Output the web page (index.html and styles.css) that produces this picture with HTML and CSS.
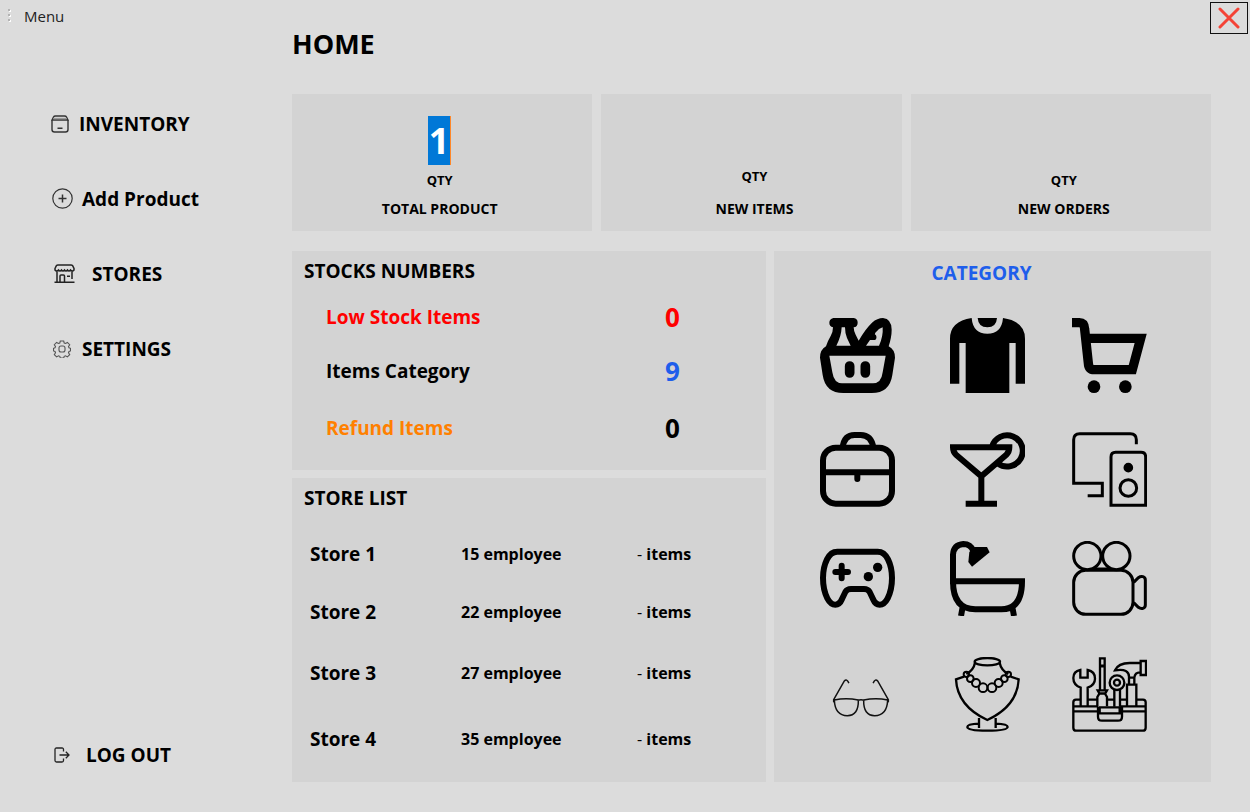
FILE: index.html
```html
<!DOCTYPE html>
<html lang="en">
<head>
<meta charset="utf-8">
<title>Home</title>
<link rel="stylesheet" href="styles.css">
</head>
<body>
<div class="app">
  <aside class="sidebar">
    <div class="menu-bar">
      <svg class="grip" viewBox="0 0 5 14" aria-hidden="true"><g fill="#fff"><path d="M2 2h2v2H2zM2 7h2v2H2zM2 12h2v2H2z"/></g><g fill="#b4b4b4"><path d="M1 1h2v2H1zM1 6h2v2H1zM1 11h2v2H1z"/></g></svg>
      <span>Menu</span>
    </div>
    <nav class="nav">
      <button class="nav-item inventory" type="button">
        <svg class="icon-18" viewBox="0 0 18 18" fill="none" stroke="#333" stroke-width="1.4"><path d="M1 5v9.500Q1 17 3.500 17h11q2.500 0 2.500-2.500V5M1 5l1.500-3Q3 1 4.500 1h9q1.500 0 2 1L17 5zM6.500 13.200h5"/><path d="M2.500 3.500h13" stroke="#999"/></svg>
        INVENTORY
      </button>
      <button class="nav-item add" type="button">
        <svg class="icon-21" viewBox="0 0 21 21" fill="none" stroke="#333" stroke-width="1.200"><circle cx="10.500" cy="10.500" r="9.700"/><path d="M10.500 6.500v8M6.500 10.500h8" stroke-width="1.500"/></svg>
        Add Product
      </button>
      <button class="nav-item stores" type="button">
        <svg class="icon-21" viewBox="0 0 21 21" fill="none" stroke="#222" stroke-width="1.500"><path d="M1 5.500 2.500 2.500Q3 2 4 2h13q1 0 1.500.500L20 5.500V7q-1.500 2-3.500 0-1.500 2-3 0-1.500 2-3 0-1.500 2-3 0-1.500 2-3 0Q2.500 9 1 7zM3 8.500V19M18 8.500V16M.500 19.200h20M6 19v-6q0-1 1-1h2.500q1 0 1 1v6M13 13.200h3"/></svg>
        STORES
      </button>
      <button class="nav-item settings" type="button">
        <svg class="icon-18" viewBox="0 0 18 18" fill="none" stroke="#555" stroke-width="1.100"><path d="M7.300 1h3.400l.5 2 1.300.5 1.900-1.100 2.300 2.300-1.200 1.800.5 1.300 1.500.5v2.600l-1.500.6-.5 1.300 1.200 1.900-2.300 2.200-1.900-1.100-1.300.5-.5 1.700H7.300l-.5-1.700-1.300-.5-1.900 1.100-2.300-2.200 1.200-1.900-.5-1.300-1.500-.6V8.300L2 7.800l.5-1.300-1.200-1.800 2.300-2.300 1.900 1.100L6.800 3z"/><rect x="6" y="6" width="6" height="6" rx="2"/></svg>
        SETTINGS
      </button>
    </nav>
    <button class="nav-item logout" type="button">
      <svg class="icon-16" viewBox="0 0 16 16" fill="none" stroke="#222" stroke-width="1.300"><path d="M9.500 4.500V2.500Q9.500 1 8 1H2.500Q1 1 1 2.500v11Q1 15 2.500 15H8q1.500 0 1.500-1.500v-2M5.500 8H15M11.800 4.800 15 8l-3.200 3.200"/></svg>
      LOG OUT
    </button>
  </aside>

  <main class="main">
    <h1 class="page-title">HOME</h1>

    <section class="stats">
      <div class="panel stat stat-total">
        <input class="stat-value" id="total" type="text" value="1" aria-describedby="total-name">
        <label class="stat-unit" for="total">QTY</label>
        <h2 class="stat-name" id="total-name">TOTAL PRODUCT</h2>
      </div>
      <div class="panel stat stat-raised">
        <p class="stat-unit">QTY</p>
        <h2 class="stat-name">NEW ITEMS</h2>
      </div>
      <div class="panel stat">
        <p class="stat-unit">QTY</p>
        <h2 class="stat-name">NEW ORDERS</h2>
      </div>
    </section>

    <div class="content">
      <div class="reports">
        <section class="panel stocks">
          <h2 class="panel-title">STOCKS NUMBERS</h2>
          <table class="stock-table">
            <tr class="low"><th scope="row">Low Stock Items</th><td>0</td></tr>
            <tr class="count"><th scope="row">Items Category</th><td>9</td></tr>
            <tr class="refund"><th scope="row">Refund Items</th><td>0</td></tr>
          </table>
        </section>
        <section class="panel store-list">
          <h2 class="panel-title">STORE LIST</h2>
          <table class="store-table">
            <tr class="row-1"><th scope="row">Store 1</th><td>15 employee</td><td><span class="dash">-</span> items</td></tr>
            <tr class="row-2"><th scope="row">Store 2</th><td>22 employee</td><td><span class="dash">-</span> items</td></tr>
            <tr class="row-3"><th scope="row">Store 3</th><td>27 employee</td><td><span class="dash">-</span> items</td></tr>
            <tr class="row-4"><th scope="row">Store 4</th><td>35 employee</td><td><span class="dash">-</span> items</td></tr>
          </table>
        </section>
      </div>

      <section class="panel category">
        <h2 class="category-title">CATEGORY</h2>
        <div class="category-grid">
          <button type="button" aria-label="Groceries"><svg viewBox="60 53 225 225">
            <path d="M100 53H161Q173 55 173 67T161 81Q161 92 167 103L176 121Q196 86 216 67Q232 53 249 53Q275 56 275 88Q275 110 266 138Q285 148 285 172L277 224Q269 278 215 278H130Q76 278 68 224L60 172Q60 148 78 138Q82 124 92 107Q99 96 99 81Q88 78 88 67T100 53Z"/>
            <path fill="#d3d3d3" d="M125 81h10q0 18 6 32l11 23h-43q15-28 16-55zM198 136l12-17h15q7-4 3-14-6-3-2-8 11-13 22-16 2 28-11 55zM88 166h169l-9 50q-4 33-29 33h-93q-24 0-29-33z"/>
            <path d="M149 197v21M196 197v21" stroke="#000" stroke-width="29" stroke-linecap="round"/></svg></button>
          <button type="button" aria-label="Clothing"><svg viewBox="450 53 225 225">
            <path d="M515 53q4 47 47 47t47-47q66 10 66 62v135h-28V128h-19v150H497V128h-19v122h-28V115q0-52 65-62zM533 53h58q-2 28-29 28t-29-28z"/></svg></button>
          <button type="button" aria-label="Shopping cart"><svg viewBox="817 53 225 225">
            <path fill="none" stroke="#000" stroke-width="28" d="M817 67h22q15 0 16 20l11 101q1 20 18 20h114l25-94H868"/><circle cx="883" cy="259" r="19"/><circle cx="977" cy="259" r="19"/></svg></button>

          <button type="button" aria-label="Bags"><svg viewBox="60 50 225 225" fill="none" stroke="#000" stroke-width="18">
            <rect x="69" y="97" width="207" height="168" rx="38"/><path d="M128 97q4-38 36-38h18q32 0 38 38M69 171h207"/><path d="M172 175v16" stroke-linecap="round"/></svg></button>
          <button type="button" aria-label="Drinks"><svg viewBox="450 50 225 225" fill="none" stroke="#000" stroke-width="18">
            <path d="M459 96h169q0 14-9 22l-75 65-76-65q-9-8-9-22zM544 180v86M497 265h94M576 94a47 47 0 1 1 18 51"/></svg></button>
          <button type="button" aria-label="Electronics"><svg viewBox="817 50 225 225" fill="none" stroke="#000" stroke-width="9">
            <path d="M1010 87V73q0-18-18-18H840q-18 0-18 18v131h86v37h-44M934 270V125q0-14 14-14h76q14 0 14 14v145z"/><circle cx="986" cy="218" r="25"/><circle cx="986" cy="157" r="10" fill="#000"/></svg></button>

          <button type="button" aria-label="Games"><svg viewBox="60 46 225 225" fill="none" stroke="#000" stroke-width="18">
            <path d="M112 78h121q20 0 31 23 12 24 12 56 0 35-13 61-10 19-24 19-13 0-20-17l-10-21q-5-9-17-9h-39q-12 0-17 9l-10 21q-7 17-20 17-14 0-24-19-13-26-13-61 0-32 12-56 11-23 31-23z"/><path d="M125 120v38M106 139h38" stroke-linecap="round"/><g fill="#000" stroke="none"><circle cx="233" cy="125" r="14"/><circle cx="205" cy="153" r="14"/></g></svg></button>
          <button type="button" aria-label="Bathroom"><svg viewBox="450 46 225 225" fill="none" stroke="#000" stroke-width="18">
            <path d="M520 76q-8-21-30-21-29 2-31 32v80h207q0 84-62 84h-78q-67 0-67-84M488 244l-5 27M637 244l5 27"/><path fill="#000" stroke="none" d="M523 64h38l8 16-53 43-11-14 3-30z"/></svg></button>
          <button type="button" aria-label="Cameras"><svg viewBox="817 46 225 225" fill="none" stroke="#000" stroke-width="9">
            <circle cx="863" cy="91" r="41"/><circle cx="950" cy="91" r="41"/><rect x="822" y="134" width="178" height="132" rx="36"/><path d="M883 130h48M1002 170l14-14q7-5 14-3 7 2 7 10v75q0 8-7 10-7 2-14-3l-14-14"/></svg></button>

          <button type="button" aria-label="Glasses"><svg viewBox="60 50 225 225" fill="none" stroke="#111" stroke-width="4.500">
            <path d="M103 179q35-8 72 0 1 47-33 47-37 0-39-47zM263 179q-35-8-72 0-1 47 33 47 37 0 39-47zM173 180q10-4 20 0M101 184v-6l32-56q7-8 13 5M265 184v-6l-32-56q-7-8-13 5" stroke-linecap="round"/></svg></button>
          <button type="button" aria-label="Jewelry"><svg viewBox="450 50 225 225" fill="none" stroke="#000" stroke-width="7">
            <ellipse cx="562" cy="64" rx="38" ry="11"/><path d="M525 67q-4 22-26 34M599 67q4 22 26 34M492 109l-24 8q4 80 94 122 90-42 94-122l-24-8M537 233v30M587 233v30M537 250q-35 1-35 10 0 11 60 11t61-11q0-9-36-10"/>
            <g stroke-width="6"><circle cx="499" cy="102" r="8"/><circle cx="511" cy="115" r="10"/><circle cx="528" cy="128" r="12"/><circle cx="549" cy="142" r="13"/><circle cx="576" cy="142" r="13"/><circle cx="596" cy="128" r="12"/><circle cx="613" cy="115" r="10"/><circle cx="625" cy="102" r="8"/></g></svg></button>
          <button type="button" aria-label="Tools"><svg viewBox="817 50 225 225" fill="none" stroke="#000" stroke-width="7">
            <path d="M843 198v-56q-22-8-22-29 0-20 21-24v23h22V89q22 4 22 26 0 19-22 27v56M893 198v-28l6-10h17l6 10v28M894 150h28l-5 9h-18zM901 148V78h14v70M901 76V54h14v22z"/>
            <circle cx="952" cy="127" r="22"/><circle cx="952" cy="127" r="9"/><path d="M944 149v50M961 149v50M982 197v-64h28v64M988 132v-20h16v20M988 112q2-29-42-22 10-22 44-22h33v28q-17-1-19 16M1023 62h16v42h-16z"/>
            <path d="M843 178h-14q-8 0-8 8v76q0 9 9 9h199q9 0 9-9v-76q0-8-8-8h-20M864 178h28M922 178h22M961 178h21M821 198h74M963 198h75M821 213h75M963 213h75M900 201h60v18h-60zM895 199v30q0 12 12 12h48q12 0 12-12v-30"/></svg></button>
        </div>
      </section>
    </div>
  </main>
  <button class="close" type="button" aria-label="Close"><svg viewBox="0 0 22 22"><path d="M2 2l18 18M20 2 2 20" stroke="#f44336" stroke-width="3" stroke-linecap="round"/></svg></button>
</div>
</body>
</html>
```
FILE: styles.css
```css
* { box-sizing: border-box; }
body {
  margin: 0;
  background: #dcdcdc;
  color: #000;
  font-family: "Open Sans", "Noto Sans", sans-serif;
  font-size: 15px;
}
h1, h2, p { margin: 0; }
button { font: inherit; color: inherit; background: none; border: 0; padding: 0; }
svg { display: block; flex: none; }

.app {
  position: relative;
  display: grid;
  grid-template-columns: 292px 1fr;
  min-height: 100vh;
}

/* Sidebar */
.sidebar { display: flex; flex-direction: column; padding-bottom: 37px; }
.menu-bar {
  display: flex;
  align-items: center;
  gap: 12px;
  height: 32px;
  padding-left: 7px;
  color: #222;
}
.grip { width: 5px; height: 14px; margin-bottom: 3px; }
.nav { display: flex; flex-direction: column; margin-top: 54px; }
.nav-item {
  display: flex;
  align-items: center;
  height: 75px;
  font-size: 19px;
  font-weight: 700;
  text-align: left;
}
.inventory { padding-left: 51px; gap: 10px; }
.add { padding-left: 52px; gap: 9px; }
.stores { padding-left: 54px; gap: 17px; }
.settings { padding-left: 53px; gap: 11px; }
.logout { height: 40px; margin-top: auto; padding-left: 54px; gap: 16px; }
.icon-16 { width: 16px; height: 16px; }
.icon-18 { width: 18px; height: 18px; }
.icon-21 { width: 21px; height: 21px; }

/* Main area */
.main {
  display: flex;
  flex-direction: column;
  padding: 26px 39px 30px 0;
}
.page-title { font-size: 27px; line-height: 36px; margin-bottom: 32px; }
.panel { background: #d3d3d3; }

.stats {
  display: grid;
  grid-template-columns: repeat(3, 1fr);
  gap: 9px;
  margin-bottom: 20px;
}
.stat {
  display: flex;
  flex-direction: column;
  align-items: center;
  justify-content: flex-end;
  height: 137px;
  padding: 0 0 11px 6px;
}
.stat-total { padding: 0 5px 11px 0; }
.stat-value {
  width: 23px;
  height: 49px;
  margin-bottom: 5px;
  padding: 0;
  border: 0;
  border-right: 1px solid #ff8728;
  background: #0078d7;
  color: #fff;
  font: 700 36px "Open Sans", "Noto Sans", sans-serif;
  text-align: center;
}
.stat-unit { font-size: 13px; font-weight: 700; line-height: 20px; margin-bottom: 8px; }
.stat-raised .stat-unit { margin-bottom: 12px; }
.stat-name { font-size: 14px; font-weight: 700; line-height: 22px; }

.content {
  display: grid;
  grid-template-columns: 474fr 437fr;
  gap: 8px;
  flex: 1;
}
.reports { display: grid; grid-template-rows: 219px 1fr; gap: 8px; }
.panel-title { padding: 7px 12px 0; font-size: 19px; line-height: 26px; font-weight: 700; }

table { width: 100%; border-collapse: collapse; table-layout: fixed; }
th, td { padding: 0; text-align: left; font-weight: 700; }
th { font-size: 19px; }

.stock-table { margin-top: 6px; }
.stock-table th { width: 373px; padding-left: 34px; }
.stock-table td { font-size: 26px; line-height: 30px; }
.low { height: 54px; color: #f00; }
.count { height: 54px; }
.count td { color: #1e5eeb; }
.refund { height: 60px; }
.refund th { color: #ff8000; }

.store-table { margin-top: 14px; }
.store-table th { width: 169px; padding-left: 18px; }
.store-table td { font-size: 16px; width: 176px; }
.store-table td:last-child { width: auto; }
.dash { font-weight: 400; }
.row-1 { height: 57px; }
.row-2 { height: 59px; }
.row-3 { height: 64px; }
.row-4 { height: 68px; }

.category { padding: 9px 64px 50px 46px; }
.category-title {
  padding-right: 4px;
  font-size: 19px;
  line-height: 26px;
  color: #1e5eeb;
  text-align: center;
}
.category-grid {
  display: grid;
  grid-template-columns: 130fr 122fr 75fr;
  grid-template-rows: 114px 109px 116px 75px;
  margin-top: 32px;
}
.category-grid button { width: 75px; height: 75px; }
.category-grid svg { width: 75px; height: 75px; }

.close {
  position: absolute;
  top: 2px;
  right: 2px;
  display: grid;
  place-items: center;
  width: 38px;
  height: 32px;
  border: 1px solid #111;
}
.close svg { width: 22px; height: 22px; }
```
